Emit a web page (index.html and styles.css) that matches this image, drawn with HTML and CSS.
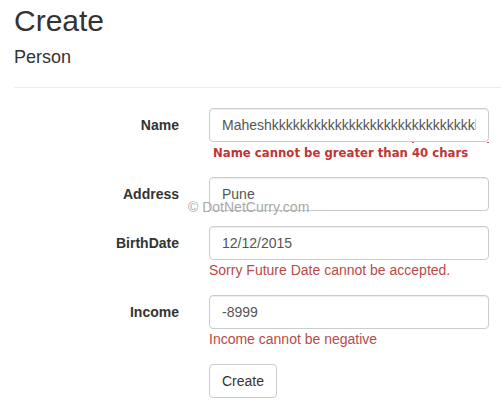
FILE: index.html
```html
<!DOCTYPE html>
<html lang="en">
<head>
  <meta charset="UTF-8">
  <meta name="viewport" content="width=device-width, initial-scale=1.0">
  <title>Create</title>
  <link rel="stylesheet" href="styles.css">
</head>
<body>
  <div class="pagina">
    <h2>Create</h2>
    <h4>Person</h4>
    <hr>

    <form class="form-horizontal">

      <div class="grupo">
        <label for="nome">Name</label>
        <div class="campo">
          <input type="text" id="nome" value="Maheshkkkkkkkkkkkkkkkkkkkkkkkkkkkkkkkkkkkkkkkk">
          <span class="erro-img">Name cannot be greater than 40 chars</span>
        </div>
      </div>

      <div class="grupo">
        <label for="endereco">Address</label>
        <div class="campo">
          <input type="text" id="endereco" value="Pune">
        </div>
        <span class="marca">&copy; DotNetCurry.com</span>
      </div>

      <div class="grupo">
        <label for="nascimento">BirthDate</label>
        <div class="campo">
          <input type="text" id="nascimento" value="12/12/2015">
          <span class="erro">Sorry Future Date cannot be accepted.</span>
        </div>
      </div>

      <div class="grupo">
        <label for="renda">Income</label>
        <div class="campo">
          <input type="text" id="renda" value="-8999">
          <span class="erro">Income cannot be negative</span>
        </div>
      </div>

      <div class="grupo">
        <div class="vazio"></div>
        <div class="campo">
          <button type="button">Create</button>
        </div>
      </div>

    </form>
  </div>
</body>
</html>
```

FILE: styles.css
```css
body{
  margin: 0;
  font-family: "Liberation Sans", Arial, sans-serif;
  font-size: 14px;
  line-height: 20px;
  color: #333;
  background: #fff;
}
.pagina{
  padding-left: 14px;
}
h2{
  margin: 0;
  padding-top: 4px;
  font-size: 30px;
  font-weight: 500;
  line-height: 33px;
}
h4{
  margin: 10px 0 0 0;
  font-size: 18px;
  font-weight: 500;
  line-height: 20px;
}
hr{
  margin: 20px 0 20px 0;
  border: 0;
  border-top: 1px solid #eee;
}

.grupo{
  position: relative;
  display: flex;
  margin-bottom: 15px;
}
label, .vazio{
  width: 165px;
  flex: none;
  padding-top: 7px;
  font-weight: bold;
  text-align: right;
}
.campo{
  padding-left: 30px;
}

input{
  display: block;
  box-sizing: border-box;
  width: 280px;
  height: 34px;
  padding: 6px 12px;
  font-family: inherit;
  font-size: 14px;
  color: #555;
  border: 1px solid #ccc;
  border-radius: 4px;
  box-shadow: inset 0 1px 1px rgba(0,0,0,.075);
}

.erro{
  display: block;
  color: #b94a48;
}
/* erro do nome e um recorte colado, com fonte diferente */
.erro-img{
  position: relative;
  display: block;
  padding: 1px 0 0 4px;
  height: 19px;
  font-family: "DejaVu Sans Condensed", "DejaVu Sans", Verdana, sans-serif;
  font-size: 13px;
  font-weight: bold;
  color: #c03535;
}
.erro-img::before,
.erro-img::after{
  content: "";
  position: absolute;
  top: 0;
  width: 2px;
  height: 1px;
  background: #d05050;
}
.erro-img::before{
  left: 203px;
}
.erro-img::after{
  left: 278px;
}
.marca{
  position: absolute;
  left: 174px;
  top: 20px;
  font-size: 14px;
  color: #a8a8a8;
}

button{
  height: 34px;
  padding: 6px 12px;
  font-family: inherit;
  font-size: 14px;
  color: #333;
  background: #fff;
  border: 1px solid #ccc;
  border-radius: 4px;
}
```
